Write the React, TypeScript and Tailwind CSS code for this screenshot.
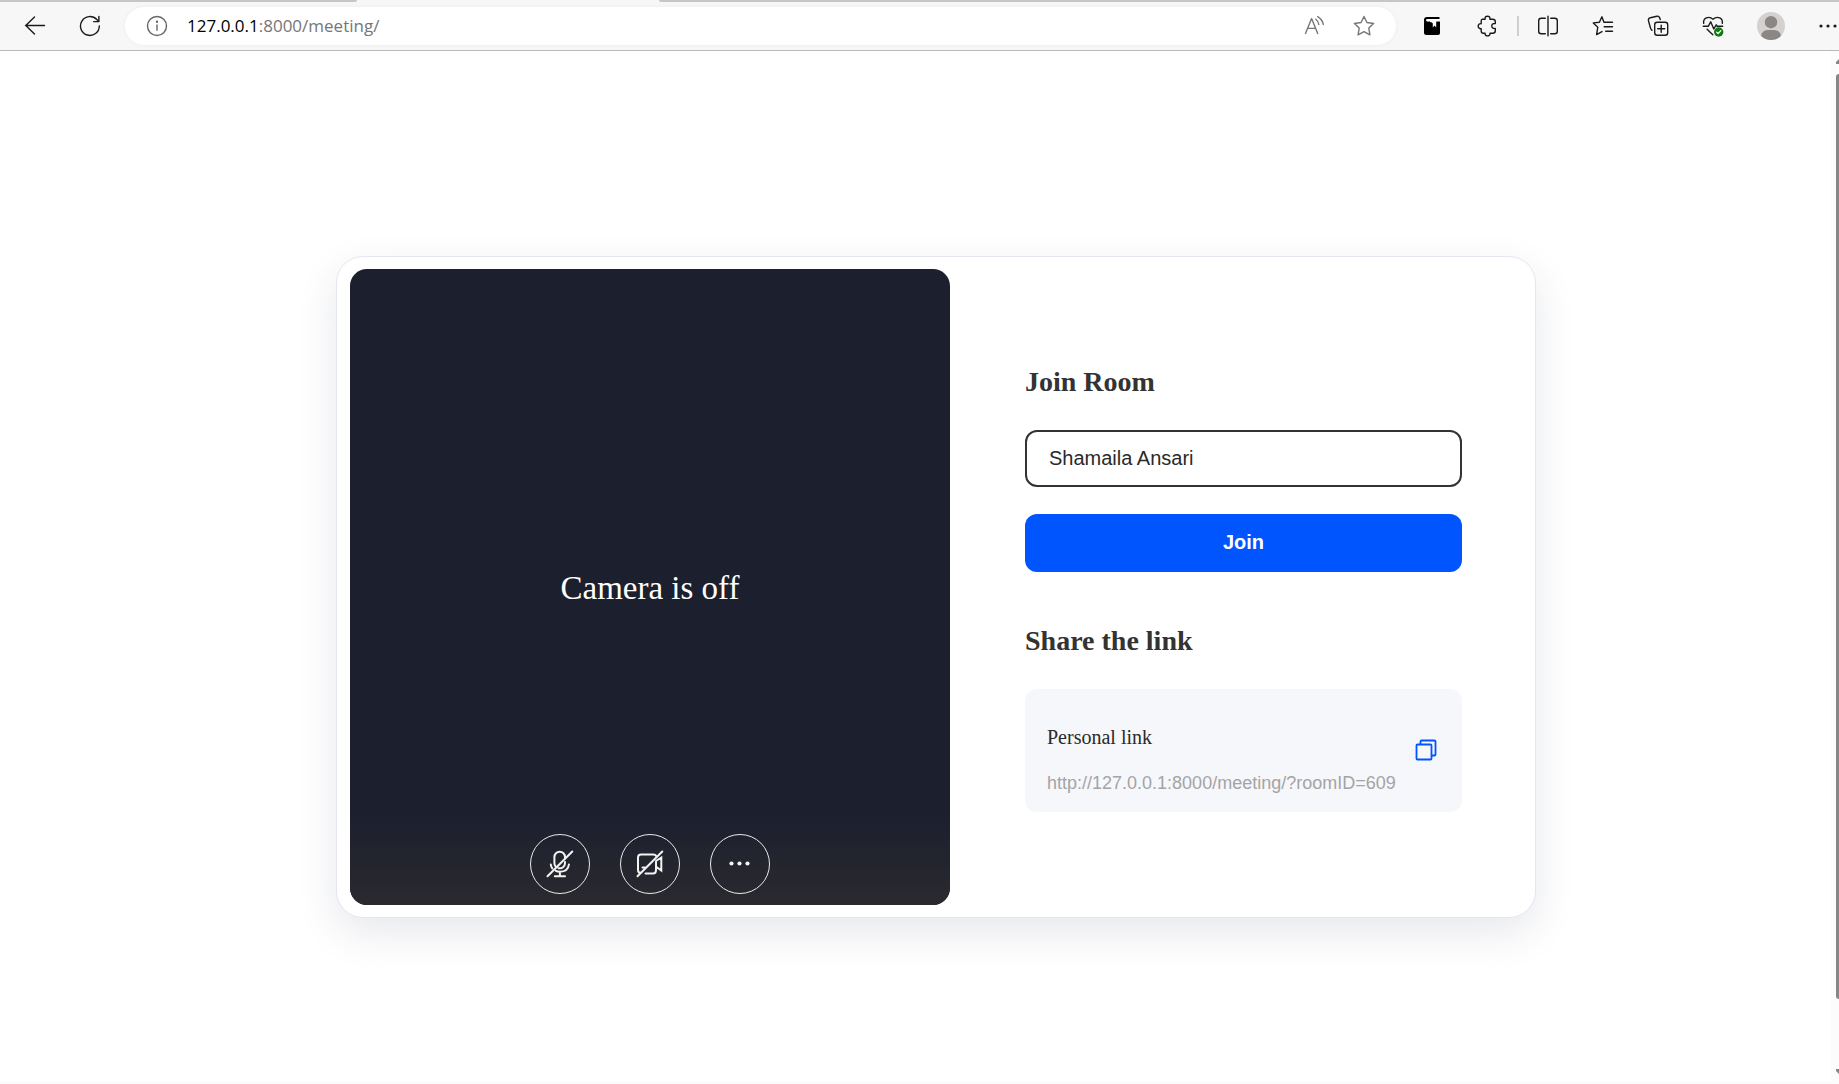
import { useState, type ReactNode } from "react";

const ROOM_LINK = "http://127.0.0.1:8000/meeting/?roomID=609";

type IconButtonProps = {
  label: string;
  className?: string;
  children: ReactNode;
};

const ToolbarButton = ({ label, className = "w-10", children }: IconButtonProps) => (
  <button
    type="button"
    aria-label={label}
    className={`flex h-9 shrink-0 items-center justify-center text-[#1b1b1b] ${className}`}
  >
    {children}
  </button>
);

const ToolbarIcon = ({ children }: { children: ReactNode }) => (
  <svg
    viewBox="0 0 22 22"
    className="size-[22px]"
    fill="none"
    stroke="currentColor"
    strokeWidth="1.4"
    strokeLinecap="round"
    strokeLinejoin="round"
  >
    {children}
  </svg>
);

const BrowserBar = () => (
  <header className="border-b border-[#b9b9b9] bg-[#f7f7f7] font-['Open_Sans','Noto_Sans',sans-serif]">
    <div className="flex h-[2px]">
      <div className="w-[357px] rounded-br bg-[#c6c6c6]" />
      <div className="w-[302px]" />
      <div className="flex-1 rounded-bl bg-[#c6c6c6]" />
    </div>
    <div className="flex h-12 items-center gap-[15px] overflow-hidden pl-[15px]">
      <ToolbarButton label="Back">
        <ToolbarIcon>
          <path d="M20.5 10.5H1.5M10.5 2 1.8 10.5 10.5 19" />
        </ToolbarIcon>
      </ToolbarButton>
      <ToolbarButton label="Refresh">
        <ToolbarIcon>
          <path d="M20.3 11A9.4 9.4 0 1 1 17.8 4.6L19.8 6.5M19.9 1.5V6.6H14.6" />
        </ToolbarIcon>
      </ToolbarButton>

      <div className="flex h-[38px] flex-1 items-center rounded-full bg-white pr-[12px] pl-[21px] shadow-[0_0_4px_rgba(0,0,0,0.05)]">
        <span className="text-[#666]">
          <ToolbarIcon>
            <circle cx="11" cy="11" r="9.5" />
            <path d="M11 10V15.3" />
            <circle cx="11" cy="6.8" r=".5" fill="currentColor" />
          </ToolbarIcon>
        </span>
        <p aria-label="Address" className="ml-[19px] flex-1 text-[17px] leading-6 text-[#767676]">
          <span className="text-black">127.0.0.1</span>:8000/meeting/
        </p>
        <button type="button" aria-label="Read aloud" className="flex w-10 justify-center text-[#767676]">
          <ToolbarIcon>
            <path d="M1.5 18.5 7.6 3.6 13.7 18.5M3.6 13.4H11.6M11.8 4.2Q14.3 6 14.8 9.5M13.7 1.6Q18.4 4.4 19.3 9.5" />
          </ToolbarIcon>
        </button>
        <button type="button" aria-label="Add to favorites" className="ml-[9px] flex w-10 justify-center text-[#767676]">
          <ToolbarIcon>
            <path d="M11 1.5 13.9 7.5 20.6 8.5 15.8 13.1 16.9 19.9 11 16.7 5.1 19.9 6.2 13.1 1.4 8.5 8.1 7.5Z" />
          </ToolbarIcon>
        </button>
      </div>

      <ToolbarButton label="Reading list" className="w-[42px]">
        <svg viewBox="0 0 18 20" className="h-5 w-[18px]">
          <path d="M4 1H16.5V3H4.5Q3 3 3 4.2T4.5 5.5H17V17Q17 19 15 19H3.5Q1 19 1 16.5V4Q1 1 4 1Z" fill="#000" />
          <path d="M4 4.2H16.5" stroke="#fff" strokeWidth="1.8" />
          <path d="M7 4.5H13.2V11.5L11.5 9.5 9.8 11.5V7.5Q9.5 6 7 6Z" fill="#fff" />
        </svg>
      </ToolbarButton>
      <div className="flex items-center gap-[9px]">
        <ToolbarButton label="Extensions">
          <ToolbarIcon>
            <path d="M5.2 4.2H8.1C7.7 1.9 9 1.2 10.5 1.2S13.3 1.9 12.9 4.2H15.6Q18.3 4.2 18.3 6.8V8.5C15.9 8.2 14.8 9.5 14.8 11S15.9 13.8 18.3 13.5V15.8Q18.3 18.3 15.7 18.3H13C13.2 20 12 20.9 10.5 20.9S7.9 20 8.1 18.3H6.5Q4.2 18.3 4.2 16V13.7C2.2 13.9 1.2 12.6 1.2 11.2S2.2 8.4 4.2 8.7V6Q4.2 4.2 5.2 4.2Z" />
          </ToolbarIcon>
        </ToolbarButton>
        <span className="h-5 w-[2px] bg-[#cfcfcf]" />
        <ToolbarButton label="Split screen">
          <ToolbarIcon>
            <path d="M8.3 3.3H4.2Q1.7 3.3 1.7 5.8V16.2Q1.7 18.7 4.2 18.7H8.3M13.7 3.3H17.8Q20.3 3.3 20.3 5.8V16.2Q20.3 18.7 17.8 18.7H13.7M11 1.2V20.8" />
          </ToolbarIcon>
        </ToolbarButton>
      </div>
      <ToolbarButton label="Favorites">
        <ToolbarIcon>
          <path d="M13.2 7.2H11.9L9.9 1.8 7.4 7.2 1.3 7.9 5.8 12.2 4.6 19.6 10 16.6M13.7 7.2H20.5M12.2 11.8H20.5M13.7 16.3H20.5" />
        </ToolbarIcon>
      </ToolbarButton>
      <ToolbarButton label="Collections">
        <ToolbarIcon>
          <rect x="7.7" y="7.2" width="13" height="13" rx="2.5" />
          <path d="M14.2 10.2V17.2M10.7 13.7H17.7M5 15.3Q3.8 14.5 3.4 12.7L1.5 5.9Q.9 3.4 3.4 2.7L9.9 1.2Q12.5.8 13.3 4.5" />
        </ToolbarIcon>
      </ToolbarButton>
      <ToolbarButton label="Browser essentials">
        <ToolbarIcon>
          <path d="M1.7 8.4C.8 3.5 6.5.2 11 4.3 15.5.2 21.2 3.5 20.3 8.4M1.3 11.3H6.2L8.7 6.8 11.8 14 14.2 9.8 15.2 11.3H20.7M5.1 14.3 10.8 19.7" />
          <circle cx="16.7" cy="17" r="4.7" fill="#107c10" stroke="none" />
          <path d="M14.6 17.1 16.1 18.5 18.9 15.6" stroke="#fff" strokeWidth="1.2" />
        </ToolbarIcon>
      </ToolbarButton>
      <ToolbarButton label="Profile" className="w-[46px]">
        <svg viewBox="0 0 28 28" className="size-7 overflow-hidden rounded-full">
          <rect width="28" height="28" fill="#d4d2cf" />
          <circle cx="14" cy="10.2" r="6.2" fill="#8b8784" />
          <path d="M4 24.5C4.5 20 7.5 18 11 18H17C20.5 18 23.5 20 24 24.5L20 28H8Z" fill="#8b8784" />
        </svg>
      </ToolbarButton>
      <ToolbarButton label="Settings and more" className="w-[30px]">
        <svg viewBox="0 0 20 20" className="ml-2 size-5" fill="currentColor">
          <circle cx="3" cy="10" r="1.6" />
          <circle cx="10" cy="10" r="1.6" />
          <circle cx="17" cy="10" r="1.6" />
        </svg>
      </ToolbarButton>
    </div>
  </header>
);

const CallControl = ({ label, children }: IconButtonProps) => (
  <button
    type="button"
    aria-label={label}
    className="flex size-[60px] items-center justify-center rounded-full border border-white/90 text-[#f3f3f3]"
  >
    <svg
      viewBox="0 0 28 28"
      className="size-7"
      fill="none"
      stroke="currentColor"
      strokeWidth="2"
      strokeLinecap="round"
    >
      {children}
    </svg>
  </button>
);

const CameraPreview = () => (
  <section
    aria-label="Camera preview"
    className="flex min-h-[636px] flex-col overflow-hidden rounded-[17px] bg-[#1c1f2e]"
  >
    <div className="flex flex-1 items-center justify-center pt-[93px] text-[33px] leading-9 text-white">
      Camera is off
    </div>
    <div className="flex h-[91px] items-center justify-center gap-[30px] bg-linear-to-b from-[#1c1f2e] to-[#2a2a2e] pt-[9px]">
      <CallControl label="Turn on microphone">
        <path d="M19 8V7A5.3 5.3 0 0 0 8.4 7V13Q8.4 15 9.4 16.2M19 12V13A5.3 5.3 0 0 1 12.5 18.2M4.8 14.5Q5 16.5 6.2 18.3M22.9 14.5Q22 21.7 13.9 21.7 11.5 21.7 9.8 20.8M13.9 21.7V26.3M8.8 26.3H19M1.5 26.3 26.3 1.5" />
      </CallControl>
      <CallControl label="Turn on camera">
        <path d="M5 23Q2 23 2 20V7.5Q2 4.5 5 4.5H17.5Q19.3 4.5 20 5.8M20 12V20Q20 23.5 17 23.5H9.5M6.5 17.5H9M20 11 25.3 7.5V20.5L20.5 17M1.5 26.3 26.3 1.5" />
      </CallControl>
      <CallControl label="More options">
        <g fill="currentColor" stroke="none">
          <circle cx="5.5" cy="13.5" r="2.1" />
          <circle cx="13.5" cy="13.5" r="2.1" />
          <circle cx="21.5" cy="13.5" r="2.1" />
        </g>
      </CallControl>
    </div>
  </section>
);

const JoinForm = () => {
  const [name, setName] = useState("Shamaila Ansari");

  const handleCopy = () => {
    navigator.clipboard?.writeText(ROOM_LINK);
  };

  return (
    <div className="flex flex-col justify-center pt-[5px] pr-[61px] pl-[75px] text-[#333]">
      <form onSubmit={(e) => e.preventDefault()}>
        <label htmlFor="name" className="block text-[28px] leading-8 font-bold">
          Join Room
        </label>
        <input
          id="name"
          type="text"
          value={name}
          onChange={(e) => setName(e.target.value)}
          className="mt-8 h-[57px] w-full rounded-xl border-2 border-[#333] px-[22px] font-['Liberation_Sans',sans-serif] text-xl text-[#2a2a2a] outline-none"
        />
        <button
          type="submit"
          className="mt-[27px] h-[58px] w-full rounded-xl bg-[#0055ff] pb-[2px] font-['Liberation_Sans',sans-serif] text-xl font-bold text-white"
        >
          Join
        </button>
      </form>

      <h2 className="mt-[53px] text-[28px] leading-8 font-bold">Share the link</h2>
      <div className="mt-8 flex items-center justify-between rounded-xl bg-[#f6f7fb] pt-[34px] pr-[25px] pb-[15px] pl-[22px]">
        <div>
          <p className="text-xl leading-7 text-[#2a2a2a]">Personal link</p>
          <a
            href={ROOM_LINK}
            className="mt-[18px] block font-['Liberation_Sans',sans-serif] text-lg leading-7 text-[#a4a4a4]"
          >
            {ROOM_LINK}
          </a>
        </div>
        <button type="button" aria-label="Copy link" onClick={handleCopy} className="mb-[21px]">
          <svg viewBox="0 0 22 22" className="size-[22px]" fill="none" stroke="#0055ff" strokeWidth="1.8">
            <rect x="1.5" y="5.5" width="15" height="15" rx="1" />
            <path d="M5.5 5.5V2.5Q5.5 1.5 6.5 1.5H19.5Q20.5 1.5 20.5 2.5V15.5Q20.5 16.5 19.5 16.5H16.5" />
          </svg>
        </button>
      </div>
    </div>
  );
};

const ScrollTrack = () => (
  <div aria-hidden="true" className="flex w-2 flex-col items-end overflow-hidden bg-[#fcfcfc] pt-2 pb-[10px]">
    <svg viewBox="0 0 3 5" className="h-[5px] w-[3px]" fill="#868686">
      <path d="M0 5V3L3 0V5Z" />
    </svg>
    <div className="mt-[10px] mb-[70px] w-[3px] flex-1 rounded-l-[3px] bg-[#868686]" />
    <svg viewBox="0 0 3 5" className="h-[5px] w-[3px]" fill="#868686">
      <path d="M0 0V2L3 5V0Z" />
    </svg>
  </div>
);

const App = () => (
  <div className="flex min-h-screen flex-col bg-white font-['Liberation_Serif',serif]">
    <BrowserBar />
    <div className="flex flex-1">
      <main className="flex flex-1 items-center justify-center border-b-[3px] border-[#fcfcfc] pt-[41px] pl-[41px]">
        <div className="grid w-full max-w-[1200px] grid-cols-[600fr_573fr] rounded-[27px] border border-[#e6e6f0] bg-white p-3 pl-[13px] shadow-[0_15px_40px_rgba(37,41,82,0.11)]">
          <CameraPreview />
          <JoinForm />
        </div>
      </main>
      <ScrollTrack />
    </div>
  </div>
);

export default App;
